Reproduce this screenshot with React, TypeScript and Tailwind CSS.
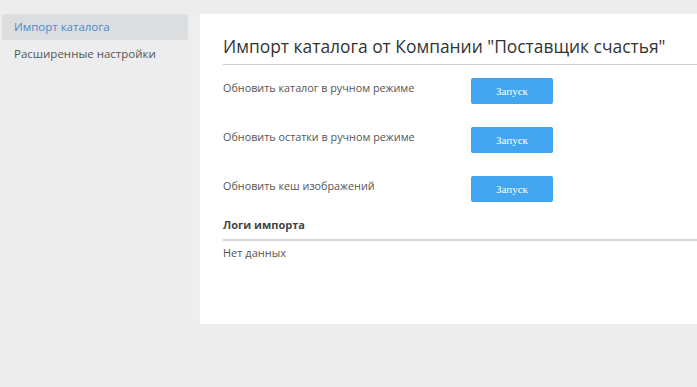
const rows = [
  'Обновить каталог в ручном режиме',
  'Обновить остатки в ручном режиме',
  'Обновить кеш изображений',
]

export default function App() {
  return (
    <div className="flex h-[387px] w-[697px] bg-[#ededed] pt-[14px] font-['Open_Sans',sans-serif]">
      <div className="flex w-[188px] flex-col">
        <div className="ml-[2px] flex h-[26px] items-center rounded-[3px] bg-[#dcddde] pl-[12px] text-[11.5px] text-[#4a8ad0]">
          Импорт каталога
        </div>
        <div className="flex h-[28px] items-center pl-[14px] text-[11.5px] text-[#555]">
          Расширенные настройки
        </div>
      </div>
      <div className="h-[311px] w-[12px] bg-[#eceef0]" />
      <div className="h-[310px] flex-1 overflow-hidden bg-white pl-[23px] pt-[20px]">
        <h1 className="mr-[-10px] border-b border-[#cfcfcf] pb-[5px] text-[17.4px] leading-[25px] text-[#333] whitespace-nowrap">
          Импорт каталога от Компании "Поставщик счастья"
        </h1>
        <div className="mt-[13px] flex flex-col gap-[23px]">
          {rows.map((r) => (
            <div key={r} className="flex items-start">
              <div className="w-[248px] pt-[2px] text-[10.8px] text-[#555]">{r}</div>
              <button className="h-[26px] w-[82px] rounded-[2px] bg-[#42a5f0] font-['Liberation_Serif',serif] text-[11px] text-white">
                Запуск
              </button>
            </div>
          ))}
        </div>
        <div className="mr-[-10px] mt-[15px] border-b-2 border-[#d5d5d5] pb-[5px] text-[11px] font-bold text-[#444]">
          Логи импорта
        </div>
        <div className="pt-[4px] text-[11px] text-[#555]">Нет данных</div>
      </div>
    </div>
  )
}
